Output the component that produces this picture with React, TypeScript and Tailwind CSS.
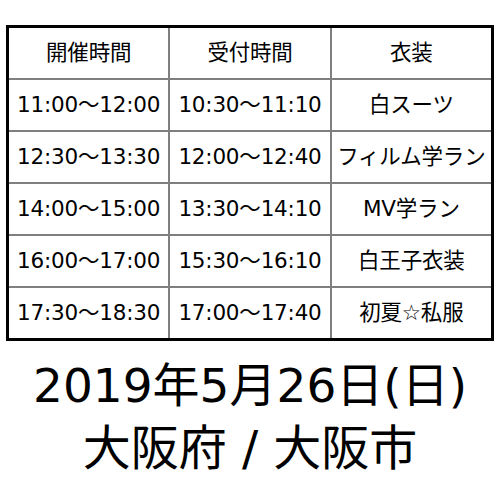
const rows = [
  ["開催時間", "受付時間", "衣装"],
  ["11:00～12:00", "10:30～11:10", "白スーツ"],
  ["12:30～13:30", "12:00～12:40", "フィルム学ラン"],
  ["14:00～15:00", "13:30～14:10", "MV学ラン"],
  ["16:00～17:00", "15:30～16:10", "白王子衣装"],
  ["17:30～18:30", "17:00～17:40", "初夏☆私服"],
]

export default function App() {
  return (
    <div
      className="w-[500px] h-[500px] bg-white text-black overflow-hidden"
      style={{ fontFamily: '"DejaVu Sans", "Noto Sans CJK JP", sans-serif' }}
    >
      <div className="ml-[6px] mt-[25px] w-[488px] border-[3px] border-black">
        <div className="grid grid-cols-3 gap-[2px] bg-[#7f7f7f]">
          {rows.map((row, i) =>
            row.map((cell, j) => (
              <div
                key={`${i}-${j}`}
                className="h-[50px] bg-white flex items-center justify-center text-[21.5px] leading-none whitespace-nowrap tracking-[-0.2px]"
              >
                {cell}
              </div>
            ))
          )}
        </div>
      </div>
      <div className="mt-[14px] flex flex-col items-center">
        <div className="text-[47px] leading-[62px] whitespace-nowrap">2019年5月26日(日)</div>
        <div className="text-[48px] leading-[62px] whitespace-nowrap">大阪府 / 大阪市</div>
      </div>
    </div>
  )
}
